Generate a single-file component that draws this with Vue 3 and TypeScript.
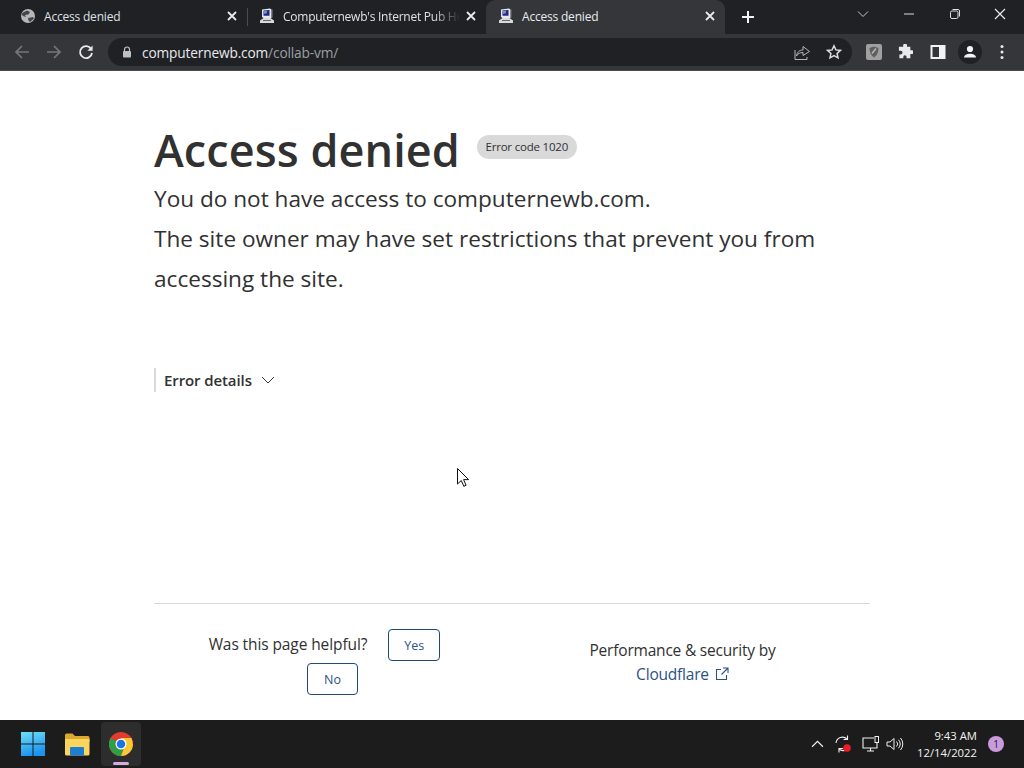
<script setup lang="ts">
interface Tab { title: string; icon: 'globe' | 'pc'; active?: boolean; divider?: boolean }
const tabs: Tab[] = [
  { title: 'Access denied', icon: 'globe', divider: true },
  { title: "Computernewb's Internet Pub Hu", icon: 'pc' },
  { title: 'Access denied', icon: 'pc', active: true },
]
</script>

<template>
  <div class="screen">
    <header class="tabstrip">
      <div v-for="tab in tabs" :key="tab.title + tab.icon" class="tab" :class="{ active: tab.active, divided: tab.divider }">
        <svg v-if="tab.icon === 'globe'" class="favicon" viewBox="0 0 16 16">
          <circle cx="8" cy="8" r="7" fill="#b4b7bb" />
          <path d="M3 4.500l4-2 3 1.500-1.500 2.500-3.500.5 1 2-3-1-1.500-2zM8 10l5-1 1 1.500-4 3.500-1.500-1.500z" fill="#45464a" />
        </svg>
        <svg v-else class="favicon" viewBox="0 0 16 16">
          <path d="M3 1.500l8-1 1.500 1v8.500H4.500L3 9z" fill="#e6e6ee" />
          <path d="M4.500 2.500l6-.6v5.800h-6z" fill="#23287a" />
          <path d="M5 3l3-.3v2.500L5 6z" fill="#6f8fd8" />
          <path d="M1 12.500l3.500-2.500h7l3.500 2.500v2.500H1z" fill="#d9d9d9" />
          <path d="M4 12.500h8" stroke="#666" stroke-width="1" />
          <path d="M13 1.500h1v8h-1z" fill="#555" />
        </svg>
        <span class="tab-title">{{ tab.title }}</span>
        <svg class="tab-close" viewBox="0 0 10 10">
          <path d="M1 1l8 8M9 1l-8 8" stroke="#e8eaed" stroke-width="1.800" />
        </svg>
      </div>
      <svg class="newtab" viewBox="0 0 12 12">
        <path d="M6 0v12M0 6h12" stroke="#f1f3f4" stroke-width="2" />
      </svg>
      <div class="winctl">
        <svg class="wc wc-chev" viewBox="0 0 12 12"><path d="M1 3.500l5 5 5-5" fill="none" stroke="#c4c7c5" stroke-width="1" /></svg>
        <svg class="wc wc-min" viewBox="0 0 12 12"><path d="M1 6h10" stroke="#dcdcdc" stroke-width="1" /></svg>
        <svg class="wc wc-max" viewBox="0 0 12 12"><rect x="1.500" y="3" width="7.500" height="7.500" rx="1.500" fill="none" stroke="#dcdcdc" /><path d="M3.500 1.500h5.500a1.500 1.500 0 0 1 1.500 1.500v5.500" fill="none" stroke="#dcdcdc" /></svg>
        <svg class="wc wc-close" viewBox="0 0 12 12"><path d="M1 1l10 10M11 1L1 11" stroke="#f0f0f0" stroke-width="1.100" /></svg>
      </div>
    </header>

    <div class="toolbar">
      <svg class="nav first" viewBox="0 0 16 16"><path d="M15 8H2M8 2L2 8l6 6" fill="none" stroke="#75777a" stroke-width="1.700" /></svg>
      <svg class="nav" viewBox="0 0 16 16"><path d="M1 8h13M8 2l6 6-6 6" fill="none" stroke="#75777a" stroke-width="1.700" /></svg>
      <svg class="nav" viewBox="0 0 16 16"><path d="M13.200 5A6 6 0 1 0 14 9" fill="none" stroke="#e8eaed" stroke-width="1.800" /><path d="M14.600 1.600v5.200H9.400z" fill="#e8eaed" /></svg>
      <div class="omnibox">
        <svg class="lock" viewBox="0 0 10 12"><path d="M2.500 5V3.500a2.500 2.500 0 0 1 5 0V5" fill="none" stroke="#bdc1c6" stroke-width="1.200" /><rect x="1" y="5" width="8" height="6.500" rx="1" fill="#bdc1c6" /></svg>
        <span class="url"><b>computernewb.com</b><i>/collab-vm/</i></span>
        <svg class="omni-icon share" viewBox="0 0 16 16"><path d="M9 6V2.500L15.500 7.500 9 11.500V8.500c-3 0-5 1-6.500 3.500.5-3.500 2.500-6 6.500-6z" fill="none" stroke="#b4b7bb" stroke-width="1" /><path d="M1 6v9.500h12v-2.500" fill="none" stroke="#b4b7bb" stroke-width="1" /></svg>
        <svg class="omni-icon star" viewBox="0 0 16 16"><path d="M8 1.800l1.900 4.100 4.500.5-3.300 3 .9 4.500L8 11.700 4 13.900l.9-4.500-3.300-3 4.500-.5z" fill="none" stroke="#dadce0" stroke-width="1.500" /></svg>
      </div>
      <div class="ext-icons">
        <svg class="ext" viewBox="0 0 16 16"><rect width="16" height="16" rx="2" fill="#a0a0a0" /><path d="M8 2.500l4.500 1.500c0 4.500-1.500 7.500-4.500 9.500C5 11.500 3.500 8.500 3.500 4z" fill="#5f5f5f" /><path d="M6 9.500l4-5" stroke="#b5b5b5" stroke-width="1.500" /></svg>
        <svg class="ext puzzle" viewBox="0 0 16 16"><path d="M6 1.500a2 2 0 0 1 4 0V3h3.500v3.500H15a2 2 0 0 1 0 4h-1.500V15H9.500v-1.500a1.700 1.700 0 0 0-3.400 0V15H2v-4h1.300a2 2 0 0 0 0-4H1.500V3H6z" fill="#e8eaed" transform="translate(0.500 0) scale(0.950)" /></svg>
        <svg class="ext panel" viewBox="0 0 16 16"><path d="M1.500 2h13v12h-13z" fill="none" stroke="#f1f3f4" stroke-width="2" /><rect x="9" y="2" width="6" height="12" fill="#f1f3f4" /></svg>
        <span class="avatar">
          <svg viewBox="0 0 16 16"><circle cx="8" cy="5" r="3.100" fill="#f1f3f4" /><path d="M2 13.500c0-2.500 3-3.800 6-3.800s6 1.300 6 3.800z" fill="#f1f3f4" /></svg>
        </span>
        <svg class="ext dots" viewBox="0 0 16 16"><circle cx="8" cy="2.500" r="1.500" fill="#e8eaed" /><circle cx="8" cy="8" r="1.500" fill="#e8eaed" /><circle cx="8" cy="13.500" r="1.500" fill="#e8eaed" /></svg>
      </div>
    </div>

    <main class="page">
      <div class="content">
        <div class="title-row">
          <h1>Access denied</h1>
          <span class="badge">Error code 1020</span>
        </div>
        <p class="lead">You do not have access to computernewb.com.</p>
        <p class="lead">The site owner may have set restrictions that prevent you from accessing the site.</p>
        <div class="details">
          <span>Error details</span>
          <svg viewBox="0 0 14 8"><path d="M1 1l6 6 6-6" fill="none" stroke="#333" stroke-width="1" /></svg>
        </div>
      </div>
      <footer class="foot">
        <div class="helpful">
          <div class="help-row">
            <span class="q">Was this page helpful?</span>
            <button class="btn yes">Yes</button>
          </div>
          <div class="help-row">
            <button class="btn no">No</button>
          </div>
        </div>
        <div class="perf">
          <div>Performance &amp; security by</div>
          <div class="cf">Cloudflare
            <svg viewBox="0 0 14 14"><path d="M6 2.500H1.500v10h10V8M8 1h5v5M13 1L6.500 7.500" fill="none" stroke="#2c5282" stroke-width="1.100" /></svg>
          </div>
        </div>
      </footer>
      <svg class="cursor" viewBox="0 0 12 19"><path d="M0.500 0.500v15.500l3.800-3.500 2.500 5.800 2.300-1-2.500-5.700h5z" fill="#fff" stroke="#111" stroke-width="1" /></svg>
    </main>

    <div class="taskbar">
      <div class="apps">
        <svg class="app" viewBox="0 0 24 24">
          <defs><linearGradient id="win" x1="0" y1="0" x2="0.300" y2="1"><stop offset="0" stop-color="#6fe0f7" /><stop offset="1" stop-color="#1b93f0" /></linearGradient></defs>
          <path d="M0 0h11.500v11.500H0zM12.500 0H24v11.500H12.500zM0 12.500h11.500V24H0zM12.500 12.500H24V24H12.500z" fill="url(#win)" />
        </svg>
        <svg class="app folder" viewBox="0 0 26 24">
          <path d="M1 3a1.500 1.500 0 0 1 1.500-1.500h6L11 4h13a1.500 1.500 0 0 1 1.500 1.500V10H1z" fill="#dca92e" />
          <path d="M1 7h24.500v15a1.500 1.500 0 0 1-1.500 1.500H2.500A1.500 1.500 0 0 1 1 22z" fill="#fbd65e" />
          <rect x="6" y="15" width="14" height="8.500" rx="1" fill="#1d7fd1" />
        </svg>
        <div class="chrome-slot">
          <svg class="chrome" viewBox="0 0 48 48">
            <circle cx="24" cy="24" r="24" fill="#e33b2e" />
            <path d="M24 24L3.200 36A24 24 0 0 1 3.200 12z" fill="#2e9e48" />
            <path d="M3.200 36L24 24l9 0L24 48A24 24 0 0 1 3.200 36z" fill="#2e9e48" />
            <path d="M33 24h14.500A24 24 0 0 0 44.800 12H24zM24 48A24 24 0 0 0 48 24H33z" fill="#fcc934" />
            <circle cx="24" cy="24" r="11" fill="#fff" />
            <circle cx="24" cy="24" r="8.500" fill="#1a73e8" />
          </svg>
          <i class="running"></i>
        </div>
      </div>
      <div class="tray">
        <svg class="t-chev" viewBox="0 0 12 7"><path d="M1 6l5-5 5 5" fill="none" stroke="#eee" stroke-width="1.100" /></svg>
        <svg class="t-sync" viewBox="0 0 18 18"><path d="M2 8a6.500 6.500 0 0 1 11-4M15 10a6 6 0 0 1-10 4" fill="none" stroke="#eee" stroke-width="1.100" /><path d="M13.500 0.500v4h-4M5 17.500v-4h4" fill="none" stroke="#eee" stroke-width="1.100" /><circle cx="13" cy="13" r="3.800" fill="#ee1c25" /></svg>
        <svg class="t-net" viewBox="0 0 18 16"><path d="M12 2H1v10h14V7M5 15h7M8.500 12v3" fill="none" stroke="#eee" stroke-width="1.100" /><rect x="13" y="0.500" width="3.500" height="6" fill="none" stroke="#eee" /></svg>
        <svg class="t-vol" viewBox="0 0 18 14"><path d="M1 5v4h3l4 3.500v-11L4 5z" fill="none" stroke="#eee" /><path d="M10.500 4.500a3.500 3.500 0 0 1 0 5M12.500 2.800a6 6 0 0 1 0 8.400M14.500 1a9 9 0 0 1 0 12" fill="none" stroke="#eee" /></svg>
        <div class="clock"><div>9:43 AM</div><div>12/14/2022</div></div>
        <span class="notif">1</span>
      </div>
    </div>
  </div>
</template>

<style>
html, body { margin: 0; background: #fff; }
</style>

<style scoped>
.screen {
  width: 1024px;
  height: 768px;
  display: flex;
  flex-direction: column;
  overflow: hidden;
  position: relative;
  font-family: "Open Sans", "Noto Sans", sans-serif;
  color: #313131;
}
.tabstrip {
  height: 34px;
  background: #202124;
  display: flex;
  align-items: stretch;
  flex: none;
}
.tab {
  width: 239px;
  display: flex;
  align-items: center;
  padding: 0 10px 2px 12px;
  box-sizing: border-box;
  color: #dee1e6;
  font-size: 12px;
  position: relative;
}
.tab.divided::after {
  content: "";
  position: absolute;
  right: -1px;
  top: 8px;
  height: 18px;
  width: 1px;
  background: #4a4c50;
}
.tab.active {
  background: #35363a;
  border-radius: 9px 9px 0 0;
  padding-left: 12px;
  color: #e8eaed;
}
.tab:first-child { width: 247px; padding-left: 20px; }
.favicon { width: 16px; height: 16px; flex: none; margin-right: 8px; }
.tab-title {
  flex: 1;
  min-width: 0;
  white-space: nowrap;
  letter-spacing: -0.2px;
}
.tab:nth-child(2) .tab-title {
  -webkit-mask-image: linear-gradient(90deg, #000 85%, transparent 100%);
  mask-image: linear-gradient(90deg, #000 85%, transparent 100%);
  letter-spacing: -0.25px;
}
.tab-close { width: 10px; height: 10px; flex: none; margin-left: 6px; }
.newtab { width: 12px; height: 12px; align-self: center; margin-left: 17px; flex: none; }
.winctl { margin-left: auto; display: flex; align-items: flex-start; padding-top: 8px; padding-right: 18px; }
.wc { width: 12px; height: 12px; flex: none; }
.wc-min { margin-left: 34px; }
.wc-max { margin-left: 34px; }
.wc-close { margin-left: 33px; }
.toolbar {
  height: 37px;
  box-sizing: border-box;
  padding-bottom: 1px;
  background: #35363a;
  box-shadow: inset 0 -1px 0 #4a4b4e;
  display: flex;
  align-items: center;
  flex: none;
}
.nav { width: 16px; height: 16px; margin-left: 16px; flex: none; }
.nav.first { margin-left: 14px; }
.omnibox {
  width: 744px;
  height: 28px;
  margin-left: 14px;
  background: #202124;
  border-radius: 14px;
  display: flex;
  align-items: center;
  box-sizing: border-box;
  padding: 0 10px 0 14px;
  flex: none;
}
.lock { width: 10px; height: 12px; flex: none; }
.url { margin-left: 10px; font-size: 13.7px; letter-spacing: -0.15px; white-space: nowrap; }
.url b { font-weight: 400; color: #e8eaed; }
.url i { font-style: normal; color: #9aa0a6; }
.omni-icon { width: 16px; height: 16px; flex: none; }
.share { margin-left: auto; }
.star { margin-left: 16px; }
.ext-icons { display: flex; align-items: center; margin-left: 14px; }
.ext { width: 16px; height: 16px; flex: none; }
.puzzle { margin-left: 15px; }
.panel { margin-left: 17px; }
.avatar {
  width: 24px;
  height: 24px;
  border-radius: 50%;
  background: #202124;
  display: flex;
  align-items: center;
  justify-content: center;
  margin-left: 12px;
}
.avatar svg { width: 16px; height: 16px; }
.dots { margin-left: 12px; }
.page {
  flex: 1;
  min-height: 0;
  background: #fff;
  padding: 0 154px;
  display: flex;
  flex-direction: column;
  position: relative;
}
.content { padding-top: 50px; height: 532px; box-sizing: border-box; }
.title-row { display: flex; align-items: flex-start; height: 58px; }
h1 {
  margin: 0;
  font-size: 45px;
  line-height: 58px;
  font-weight: 600;
  color: #313131;
  letter-spacing: 0.08px;
  white-space: nowrap;
}
.badge {
  margin: 14px 0 0 17px;
  height: 24px;
  line-height: 24px;
  padding: 0 8.500px;
  border-radius: 12px;
  background: #d9d9d9;
  font-size: 11.500px;
  letter-spacing: -0.2px;
  color: #313131;
  white-space: nowrap;
}
.lead {
  margin: 0;
  font-size: 22.600px;
  line-height: 40px;
  color: #313131;
  width: 680px;
}
.details {
  margin-top: 69px;
  height: 24px;
  border-left: 2px solid #d9d9d9;
  padding-left: 8px;
  display: flex;
  align-items: center;
  font-size: 15px;
  font-weight: 600;
  letter-spacing: -0.1px;
}
.details svg { width: 14px; height: 8px; margin-left: 9px; }
.foot {
  border-top: 1px solid #d9d9d9;
  display: flex;
  font-size: 15.500px;
  flex: 1;
}
.helpful {
  width: 341px;
  display: flex;
  flex-direction: column;
  padding-top: 25px;
  row-gap: 2px;
}
.help-row { display: flex; justify-content: center; align-items: center; }
.q { margin: -2px 21px 0 0; letter-spacing: -0.1px; }
.btn {
  font: inherit;
  font-size: 12.500px;
  height: 32px;
  padding: 0;
  background: #fff;
  color: #2c5282;
  border: 1px solid #1f4a79;
  border-radius: 4px;
  box-sizing: border-box;
}
.btn.yes { width: 52px; }
.btn.no { width: 51px; margin-left: 16px; }
.perf {
  flex: 1;
  text-align: center;
  padding-top: 34px;
  line-height: 24px;
  letter-spacing: -0.2px;
}
.cf { color: #2c5282; display: flex; justify-content: center; align-items: center; }
.cf svg { width: 14px; height: 14px; margin-left: 6px; }
.cursor { position: absolute; left: 457px; top: 397px; width: 12px; height: 19px; }
.taskbar {
  height: 48px;
  background: #1c1c1c;
  display: flex;
  align-items: center;
  flex: none;
}
.apps { display: flex; align-items: center; padding-left: 21px; }
.app { width: 24px; height: 24px; flex: none; }
.folder { margin-left: 19px; width: 26px; }
.chrome-slot {
  width: 40px;
  height: 44px;
  margin-left: 11px;
  background: #2d2d2d;
  border-radius: 4px;
  display: flex;
  align-items: center;
  justify-content: center;
  position: relative;
}
.chrome { width: 24px; height: 24px; }
.running {
  position: absolute;
  bottom: 1px;
  left: 12px;
  width: 16px;
  height: 3px;
  border-radius: 2px;
  background: #d6a9e6;
}
.tray { margin-left: auto; display: flex; align-items: center; color: #f2f2f2; }
.t-chev { width: 13px; height: 8px; }
.t-sync { width: 18px; height: 18px; margin-left: 10px; }
.t-net { width: 18px; height: 16px; margin-left: 10px; }
.t-vol { width: 18px; height: 14px; margin-left: 6px; }
.clock {
  width: 73px;
  text-align: right;
  font-size: 11.300px;
  line-height: 17px;
}
.notif {
  width: 16px;
  height: 16px;
  border-radius: 50%;
  background: #c79bdc;
  color: #1c1c1c;
  font-size: 10px;
  line-height: 16px;
  text-align: center;
  margin: 0 20px 0 11px;
}
</style>
